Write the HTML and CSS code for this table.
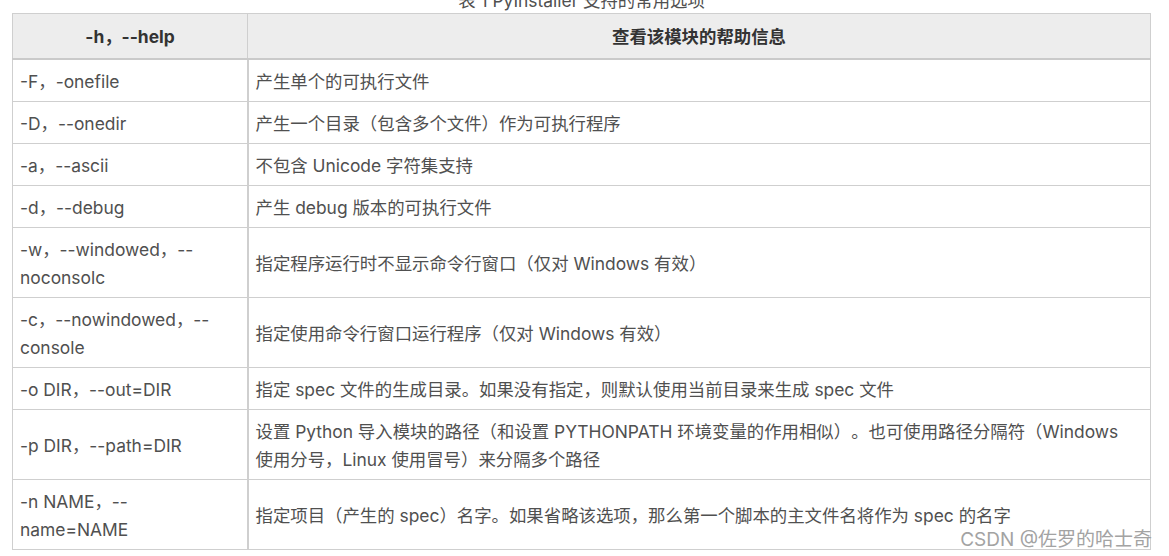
FILE: index.html
```html
<!DOCTYPE html>
<html lang="zh-CN">
<head>
<meta charset="utf-8">
<title>PyInstaller 支持的常用选项</title>
<link rel="stylesheet" href="styles.css">
</head>
<body>
<div class="wrap">
  <div class="caption">表 1 PyInstaller 支持的常用选项</div>
  <table class="opts">
    <colgroup><col class="c1"><col class="c2"></colgroup>
    <thead>
      <tr><th>-h，--help</th><th>查看该模块的帮助信息</th></tr>
    </thead>
    <tbody>
      <tr><td>-F，-onefile</td><td>产生单个的可执行文件</td></tr>
      <tr><td>-D，--onedir</td><td>产生一个目录（包含多个文件）作为可执行程序</td></tr>
      <tr><td>-a，--ascii</td><td>不包含 Unicode 字符集支持</td></tr>
      <tr><td>-d，--debug</td><td>产生 debug 版本的可执行文件</td></tr>
      <tr><td>-w，--windowed，--<br>noconsolc</td><td>指定程序运行时不显示命令行窗口（仅对 Windows 有效）</td></tr>
      <tr><td>-c，--nowindowed，--<br>console</td><td>指定使用命令行窗口运行程序（仅对 Windows 有效）</td></tr>
      <tr><td>-o DIR，--out=DIR</td><td>指定 spec 文件的生成目录。如果没有指定，则默认使用当前目录来生成 spec 文件</td></tr>
      <tr><td>-p DIR，--path=DIR</td><td>设置 Python 导入模块的路径（和设置 PYTHONPATH 环境变量的作用相似）。也可使用路径分隔符（Windows<br>使用分号，Linux 使用冒号）来分隔多个路径</td></tr>
      <tr><td>-n NAME，--<br>name=NAME</td><td>指定项目（产生的 spec）名字。如果省略该选项，那么第一个脚本的主文件名将作为 spec 的名字</td></tr>
    </tbody>
  </table>
  <div class="watermark">CSDN @佐罗的哈士奇</div>
</div>
</body>
</html>
```

FILE: styles.css
```css
html, body {
  margin: 0;
  padding: 0;
  background: #fff;
  overflow: hidden;
}
body {
  font-family: "Inter", "Noto Sans CJK SC", sans-serif;
  font-size: 17.4px;
  color: #505050;
  text-spacing-trim: space-all;
}
.wrap {
  position: relative;
  width: 1139px;
  margin-left: 12px;
}
.caption {
  margin-top: -9px;
  margin-bottom: 2px;
  line-height: 20px;
  text-align: center;
  color: #505050;
}
.opts {
  width: 1139px;
  table-layout: fixed;
  border-collapse: collapse;
  border: 1px solid #cfcfcf;
}
.c1 { width: 235px; }
.opts th, .opts td {
  border: 1px solid #cfcfcf;
  line-height: 28px;
  vertical-align: middle;
}
.opts th {
  background: #ededed;
  color: #333;
  font-weight: bold;
  text-align: center;
  padding: 9px 7px 7px 7px;
  border-bottom: 2px solid #cacaca;
}
.opts td {
  padding: 8px 7px 5px 7px;
  text-align: left;
}
.opts td:first-child {
  border-right: 2px solid #cfcfcf;
}
.watermark {
  position: absolute;
  right: -1px;
  bottom: -2px;
  font-size: 19px;
  line-height: 24px;
  color: #a3a3a3;
}
```
